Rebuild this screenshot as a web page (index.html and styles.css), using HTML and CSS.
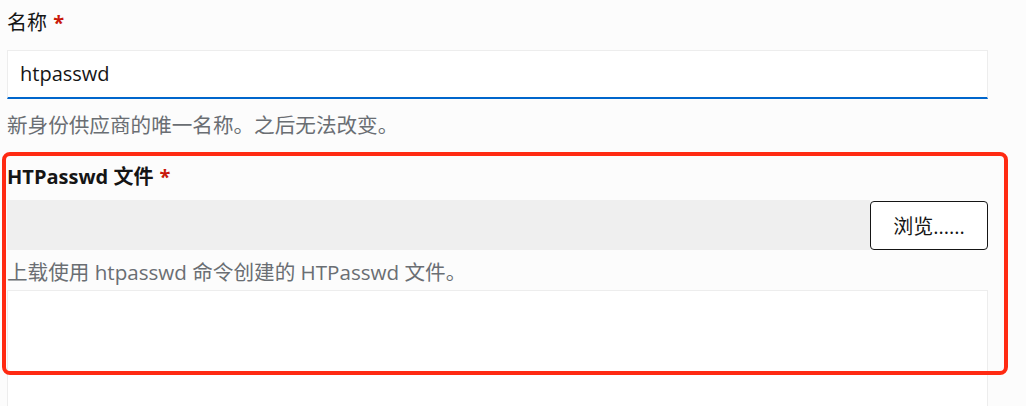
FILE: index.html
```html
<!DOCTYPE html>
<html lang="zh-CN">
<head>
<meta charset="utf-8">
<title>HTPasswd</title>
<link rel="stylesheet" href="styles.css">
</head>
<body>
<div class="form">
  <div class="group">
    <label class="label">名称 <span class="req">*</span></label>
    <div class="input">htpasswd</div>
    <p class="help">新身份供应商的唯一名称。之后无法改变。</p>
  </div>
  <div class="group file-group">
    <label class="label bold">HTPasswd 文件 <span class="req">*</span></label>
    <div class="file-row">
      <div class="file-name"></div>
      <button class="browse">浏览......</button>
    </div>
    <p class="help">上载使用 htpasswd 命令创建的 HTPasswd 文件。</p>
    <div class="textarea"></div>
  </div>
  <div class="highlight"></div>
</div>
</body>
</html>
```
FILE: styles.css
```css
html, body {
  margin: 0;
  padding: 0;
  background: #fcfcfc;
  overflow: hidden;
}
body {
  font-family: "Open Sans", "Noto Sans CJK SC", sans-serif;
  font-size: 20px;
  color: #151515;
  height: 406px;
}
.form {
  position: relative;
  width: 981px;
  padding: 8px 0 0 7px;
}
.group {
  display: flex;
  flex-direction: column;
}
.label {
  display: block;
  line-height: 30px;
  height: 30px;
}
.bold {
  font-weight: 700;
}
.req {
  color: #c9190b;
  font-weight: 700;
  margin-left: 1px;
}
.input {
  margin-top: 12px;
  box-sizing: border-box;
  height: 49px;
  background: #fff;
  border: 1px solid #ededed;
  border-bottom: 2px solid #0066cc;
  padding: 0 12px;
  line-height: 46px;
}
.help {
  margin: 11px 0 0;
  line-height: 30px;
  font-size: 20.6px;
  color: #6a6e73;
}
.file-group {
  margin-top: 22px;
}
.file-row {
  display: flex;
  margin-top: 8px;
  height: 50px;
}
.file-name {
  flex: 1;
  background: #efefef;
}
.browse {
  width: 118px;
  height: 49px;
  background: #fff;
  border: 1px solid #151515;
  border-radius: 4px;
  font-family: inherit;
  font-size: 20px;
  color: #151515;
  padding: 0;
  margin-top: 1px;
}
.file-group .help {
  margin-top: 7px;
}
.textarea {
  margin-top: 3px;
  height: 150px;
  background: #fff;
  border: 1px solid #ededed;
}
.highlight {
  position: absolute;
  left: 2px;
  top: 152px;
  width: 1006px;
  height: 223px;
  box-sizing: border-box;
  border: 4px solid #ff2a12;
  border-radius: 8px;
  pointer-events: none;
}
```
